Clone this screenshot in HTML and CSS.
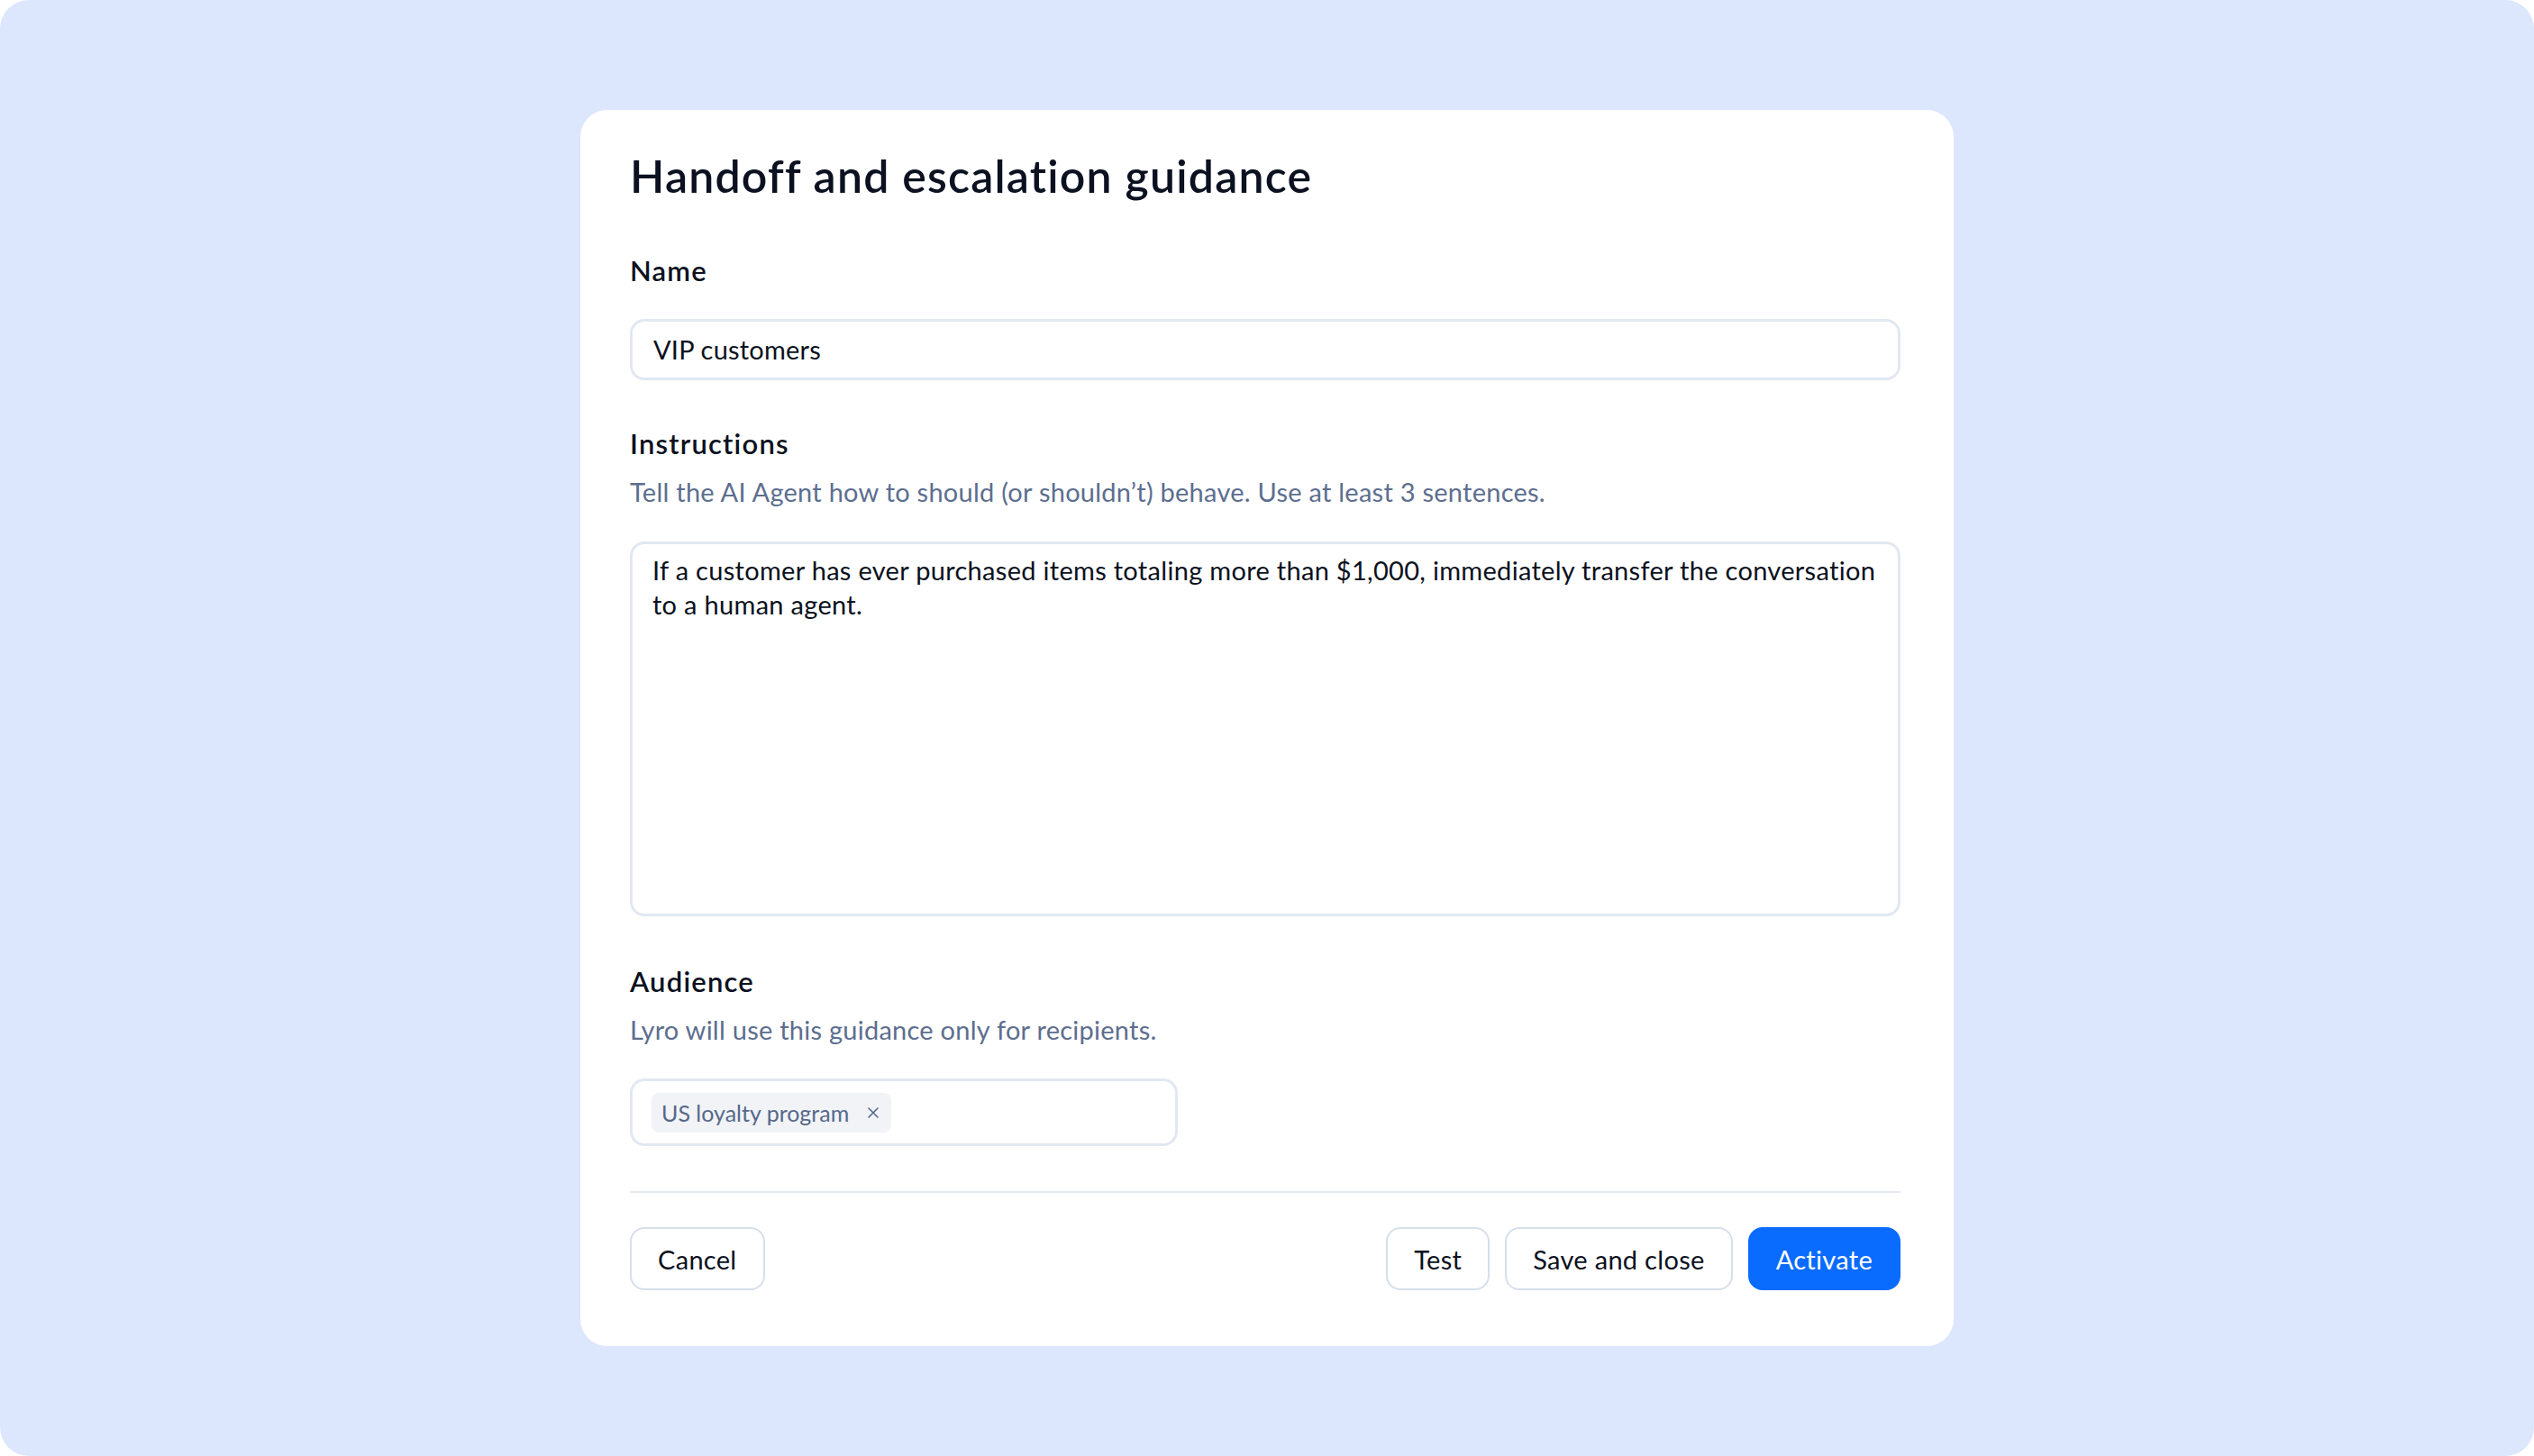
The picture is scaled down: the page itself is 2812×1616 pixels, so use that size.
FILE: index.html
```html
<!DOCTYPE html>
<html lang="en">
<head>
<meta charset="utf-8">
<title>Handoff and escalation guidance</title>
<link rel="stylesheet" href="styles.css">
</head>
<body>
<div class="stage">
  <div class="card">
    <h1 class="title">Handoff and escalation guidance</h1>

    <div class="label label-first">Name</div>
    <div class="input">VIP customers</div>

    <div class="label">Instructions</div>
    <div class="helper">Tell the AI Agent how to should (or shouldn’t) behave. Use at least 3 sentences.</div>
    <div class="textarea">
      <div class="line">If a customer has ever purchased items totaling more than $1,000, immediately transfer the conversation</div>
      <div class="line">to a human agent.</div>
    </div>

    <div class="label label-audience">Audience</div>
    <div class="helper">Lyro will use this guidance only for recipients.</div>
    <div class="tags">
      <span class="chip">US loyalty program
        <svg class="chip-x" viewBox="0 0 14 14" width="14" height="14" aria-hidden="true"><path d="M2 2 L12 12 M12 2 L2 12" stroke="currentColor" stroke-width="1.6" stroke-linecap="round" fill="none"/></svg>
      </span>
    </div>

    <div class="divider"></div>

    <div class="footer">
      <button class="btn">Cancel</button>
      <div class="footer-right">
        <button class="btn">Test</button>
        <button class="btn">Save and close</button>
        <button class="btn btn-primary">Activate</button>
      </div>
    </div>
  </div>
</div>
</body>
</html>
```

FILE: styles.css
```css
html, body {
  margin: 0;
  padding: 0;
  background: #ffffff;
}

body {
  font-family: "Lato", "Liberation Sans", sans-serif;
  color: #0b1120;
}

.stage {
  width: 2812px;
  height: 1616px;
  background: #dce7fd;
  border-radius: 32px;
  display: flex;
  align-items: center;
  justify-content: center;
}

.card {
  width: 1524px;
  height: 1372px;
  box-sizing: border-box;
  background: #ffffff;
  border-radius: 30px;
  padding: 44px 59px 0 55px;
  display: flex;
  flex-direction: column;
}

.title {
  margin: 0;
  font-size: 50px;
  line-height: 58px;
  font-weight: 600;
  letter-spacing: 1.2px;
}

.label {
  font-size: 31px;
  line-height: 34px;
  font-weight: 600;
  letter-spacing: 1.2px;
  margin-top: 53px;
}

.label-first {
  margin-top: 59px;
}

.label-audience {
  margin-top: 55px;
}

.helper {
  font-size: 29px;
  line-height: 34px;
  letter-spacing: 0.25px;
  color: #5d6e8f;
  margin-top: 20px;
}

.input {
  margin-top: 37px;
  height: 68px;
  box-sizing: border-box;
  border: 3px solid #e2e8f1;
  border-radius: 16px;
  padding: 0 23px;
  display: flex;
  align-items: center;
  font-size: 29px;
  line-height: 34px;
  letter-spacing: 0.2px;
}

.textarea {
  margin-top: 38px;
  height: 416px;
  box-sizing: border-box;
  border: 3px solid #e2e8f1;
  border-radius: 16px;
  padding: 10px 22px;
  font-size: 29px;
  line-height: 38px;
  letter-spacing: 0.3px;
}

.line {
  white-space: nowrap;
}

.tags {
  margin-top: 37px;
  width: 608px;
  height: 75px;
  box-sizing: border-box;
  border: 3px solid #e2e8f1;
  border-radius: 16px;
  padding: 13px 21px;
  display: flex;
  align-items: center;
}

.chip {
  height: 44px;
  box-sizing: border-box;
  display: inline-flex;
  align-items: center;
  gap: 20px;
  padding: 0 13px 0 11px;
  background: #f1f3f7;
  border-radius: 8px;
  color: #56688a;
  font-size: 25px;
}

.chip-x {
  width: 14px;
  height: 14px;
}

.divider {
  margin-top: 50px;
  height: 2px;
  background: #e4e9f1;
}

.footer {
  margin-top: 38px;
  display: flex;
  justify-content: space-between;
  align-items: center;
}

.footer-right {
  display: flex;
  gap: 17px;
}

.btn {
  height: 70px;
  box-sizing: border-box;
  padding: 0 29px;
  border: 2px solid #d6dfea;
  border-radius: 16px;
  background: #ffffff;
  color: #0b1120;
  font-family: "Lato", "Liberation Sans", sans-serif;
  font-size: 29px;
  font-weight: 400;
  letter-spacing: 0.3px;
}

.btn-primary {
  background: #0a6bff;
  border-color: #0a6bff;
  color: #ffffff;
}
```
